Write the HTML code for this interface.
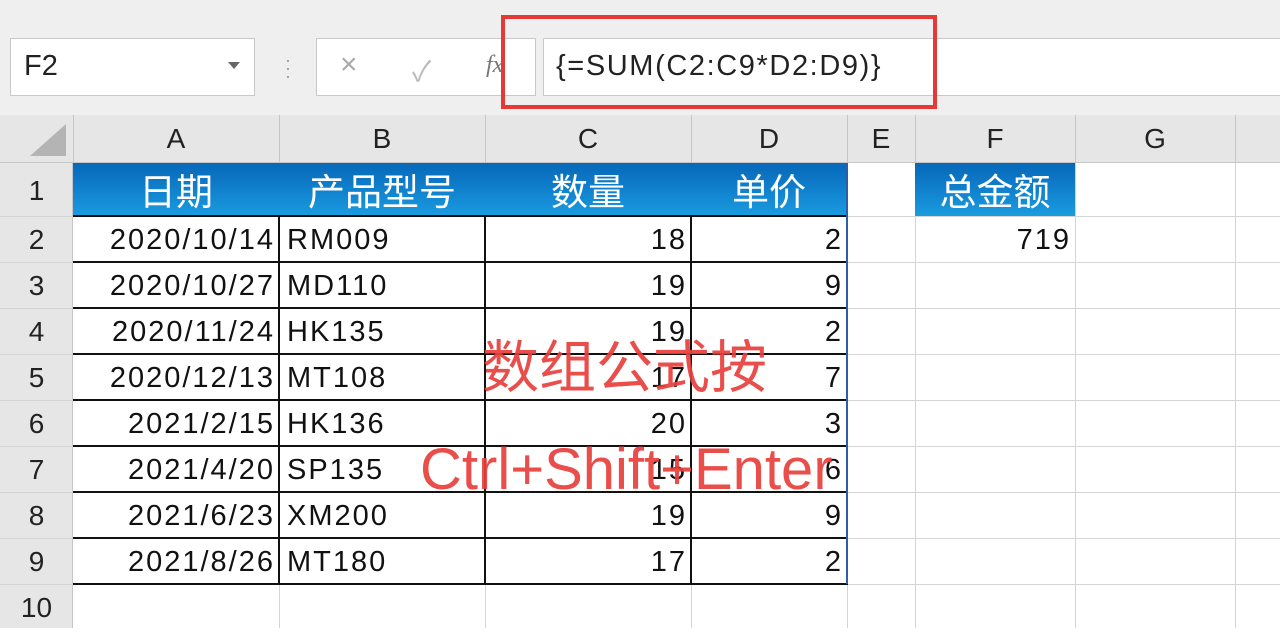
<!DOCTYPE html>
<html><head><meta charset="utf-8"><style>
*{margin:0;padding:0;box-sizing:border-box}
body{width:1280px;height:628px;overflow:hidden;background:#fff;position:relative;font-family:"Liberation Sans","Noto Sans CJK SC",sans-serif}
.a{position:absolute}
.vl{position:absolute;width:1px;background:#d4d4d4}
.hl{position:absolute;height:1px;background:#d4d4d4}
.c{position:absolute;height:46px;line-height:48px;font-size:29px;letter-spacing:2px;color:#111;white-space:nowrap}
.r{text-align:right;padding-right:4px}
.l{padding-left:8px}
.rh{position:absolute;left:0;width:73px;text-align:center;font-size:28px;color:#222;line-height:48px;height:46px}
.ch{position:absolute;top:115px;height:48px;line-height:48px;text-align:center;font-size:28px;color:#222}
.hd{position:absolute;top:163px;height:53px;line-height:53px;text-align:center;color:#fff;font-size:37px;font-family:"Noto Sans CJK SC",sans-serif;background:linear-gradient(#0767b9,#1a9be0)}
.bk{position:absolute;background:#111}
</style></head><body>
<div class="a" style="left:0;top:0;width:1280px;height:115px;background:#efefef"></div>
<div class="a" style="left:10px;top:38px;width:245px;height:58px;background:#fff;border:1px solid #c8c8c8"></div>
<div class="a" style="left:24px;top:50px;font-size:29px;color:#222">F2</div>
<div class="a" style="left:228px;top:62px;width:0;height:0;border-left:6px solid transparent;border-right:6px solid transparent;border-top:7px solid #666"></div>
<div class="a" style="left:285px;top:56px;font-size:18px;color:#999;line-height:8px">·<br>·<br>·</div>
<div class="a" style="left:316px;top:38px;width:220px;height:58px;background:#fff;border:1px solid #c8c8c8"></div>
<div class="a" style="left:340px;top:48px;font-size:30px;color:#aaa">×</div>
<div class="a" style="left:412px;top:50px;font-size:28px;color:#bbb">✓</div>
<div class="a" style="left:486px;top:52px;font-size:24px;color:#777;font-style:italic;font-family:'Liberation Serif',serif">fx</div>
<div class="a" style="left:543px;top:38px;width:737px;height:58px;background:#fff;border:1px solid #c8c8c8;border-right:none"></div>
<div class="a" style="left:556px;top:50px;font-size:29px;letter-spacing:1.6px;color:#222">{=SUM(C2:C9*D2:D9)}</div>
<div class="a" style="left:501px;top:15px;width:436px;height:94px;border:4px solid #e53935"></div>
<div class="a" style="left:0;top:115px;width:1280px;height:48px;background:#e6e6e6;border-bottom:1px solid #c6c6c6"></div>
<div class="a" style="left:0;top:163px;width:73px;height:465px;background:#e6e6e6;border-right:1px solid #c6c6c6"></div>
<div class="a" style="left:30px;top:124px;width:0;height:0;border-left:36px solid transparent;border-bottom:32px solid #b4b4b4"></div>
<div class="vl" style="left:73px;top:115px;height:48px;background:#c6c6c6"></div>
<div class="vl" style="left:279px;top:115px;height:48px;background:#c6c6c6"></div>
<div class="vl" style="left:485px;top:115px;height:48px;background:#c6c6c6"></div>
<div class="vl" style="left:691px;top:115px;height:48px;background:#c6c6c6"></div>
<div class="vl" style="left:847px;top:115px;height:48px;background:#c6c6c6"></div>
<div class="vl" style="left:915px;top:115px;height:48px;background:#c6c6c6"></div>
<div class="vl" style="left:1075px;top:115px;height:48px;background:#c6c6c6"></div>
<div class="vl" style="left:1235px;top:115px;height:48px;background:#c6c6c6"></div>
<div class="ch" style="left:73px;width:206px">A</div>
<div class="ch" style="left:279px;width:206px">B</div>
<div class="ch" style="left:485px;width:206px">C</div>
<div class="ch" style="left:691px;width:156px">D</div>
<div class="ch" style="left:847px;width:68px">E</div>
<div class="ch" style="left:915px;width:160px">F</div>
<div class="ch" style="left:1075px;width:160px">G</div>
<div class="vl" style="left:847px;top:163px;height:465px"></div>
<div class="vl" style="left:915px;top:163px;height:465px"></div>
<div class="vl" style="left:1075px;top:163px;height:465px"></div>
<div class="vl" style="left:1235px;top:163px;height:465px"></div>
<div class="vl" style="left:279px;top:584px;height:44px"></div>
<div class="vl" style="left:485px;top:584px;height:44px"></div>
<div class="vl" style="left:691px;top:584px;height:44px"></div>
<div class="hl" style="left:0;top:216px;width:1280px"></div>
<div class="hl" style="left:0;top:262px;width:1280px"></div>
<div class="hl" style="left:0;top:308px;width:1280px"></div>
<div class="hl" style="left:0;top:354px;width:1280px"></div>
<div class="hl" style="left:0;top:400px;width:1280px"></div>
<div class="hl" style="left:0;top:446px;width:1280px"></div>
<div class="hl" style="left:0;top:492px;width:1280px"></div>
<div class="hl" style="left:0;top:538px;width:1280px"></div>
<div class="hl" style="left:0;top:584px;width:1280px"></div>
<div class="rh" style="top:166px;height:50px;line-height:50px">1</div>
<div class="rh" style="top:216px">2</div>
<div class="rh" style="top:262px">3</div>
<div class="rh" style="top:308px">4</div>
<div class="rh" style="top:354px">5</div>
<div class="rh" style="top:400px">6</div>
<div class="rh" style="top:446px">7</div>
<div class="rh" style="top:492px">8</div>
<div class="rh" style="top:538px">9</div>
<div class="rh" style="top:584px">10</div>
<div class="hd" style="left:73px;width:775px"></div>
<div class="hd" style="left:73px;width:206px;background:none">日期</div>
<div class="hd" style="left:279px;width:206px;background:none">产品型号</div>
<div class="hd" style="left:485px;width:206px;background:none">数量</div>
<div class="hd" style="left:691px;width:156px;background:none">单价</div>
<div class="hd" style="left:915px;width:160px">总金额</div>
<div class="bk" style="left:73px;top:215px;width:775px;height:2px"></div>
<div class="bk" style="left:73px;top:261px;width:775px;height:2px"></div>
<div class="bk" style="left:73px;top:307px;width:775px;height:2px"></div>
<div class="bk" style="left:73px;top:353px;width:775px;height:2px"></div>
<div class="bk" style="left:73px;top:399px;width:775px;height:2px"></div>
<div class="bk" style="left:73px;top:445px;width:775px;height:2px"></div>
<div class="bk" style="left:73px;top:491px;width:775px;height:2px"></div>
<div class="bk" style="left:73px;top:537px;width:775px;height:2px"></div>
<div class="bk" style="left:73px;top:583px;width:775px;height:2px"></div>
<div class="bk" style="left:278px;top:216px;width:2px;height:368px"></div>
<div class="bk" style="left:484px;top:216px;width:2px;height:368px"></div>
<div class="bk" style="left:690px;top:216px;width:2px;height:368px"></div>
<div class="a" style="left:846px;top:163px;width:2px;height:421px;background:#2b5fa8"></div>
<div class="c r" style="left:73px;top:216px;width:206px">2020/10/14</div>
<div class="c l" style="left:279px;top:216px">RM009</div>
<div class="c r" style="left:485px;top:216px;width:206px">18</div>
<div class="c r" style="left:691px;top:216px;width:156px">2</div>
<div class="c r" style="left:915px;top:216px;width:160px">719</div>
<div class="c r" style="left:73px;top:262px;width:206px">2020/10/27</div>
<div class="c l" style="left:279px;top:262px">MD110</div>
<div class="c r" style="left:485px;top:262px;width:206px">19</div>
<div class="c r" style="left:691px;top:262px;width:156px">9</div>
<div class="c r" style="left:73px;top:308px;width:206px">2020/11/24</div>
<div class="c l" style="left:279px;top:308px">HK135</div>
<div class="c r" style="left:485px;top:308px;width:206px">19</div>
<div class="c r" style="left:691px;top:308px;width:156px">2</div>
<div class="c r" style="left:73px;top:354px;width:206px">2020/12/13</div>
<div class="c l" style="left:279px;top:354px">MT108</div>
<div class="c r" style="left:485px;top:354px;width:206px">17</div>
<div class="c r" style="left:691px;top:354px;width:156px">7</div>
<div class="c r" style="left:73px;top:400px;width:206px">2021/2/15</div>
<div class="c l" style="left:279px;top:400px">HK136</div>
<div class="c r" style="left:485px;top:400px;width:206px">20</div>
<div class="c r" style="left:691px;top:400px;width:156px">3</div>
<div class="c r" style="left:73px;top:446px;width:206px">2021/4/20</div>
<div class="c l" style="left:279px;top:446px">SP135</div>
<div class="c r" style="left:485px;top:446px;width:206px">15</div>
<div class="c r" style="left:691px;top:446px;width:156px">6</div>
<div class="c r" style="left:73px;top:492px;width:206px">2021/6/23</div>
<div class="c l" style="left:279px;top:492px">XM200</div>
<div class="c r" style="left:485px;top:492px;width:206px">19</div>
<div class="c r" style="left:691px;top:492px;width:156px">9</div>
<div class="c r" style="left:73px;top:538px;width:206px">2021/8/26</div>
<div class="c l" style="left:279px;top:538px">MT180</div>
<div class="c r" style="left:485px;top:538px;width:206px">17</div>
<div class="c r" style="left:691px;top:538px;width:156px">2</div>
<div class="a" style="left:482px;top:328px;font-size:57px;line-height:70px;color:#e8403c;font-family:'Noto Sans CJK SC',sans-serif;opacity:.92">数组公式按</div>
<div class="a" style="left:420px;top:437px;font-size:58px;line-height:66px;color:#e8403c;opacity:.92;white-space:nowrap">Ctrl+Shift+Enter</div>
</body></html>
